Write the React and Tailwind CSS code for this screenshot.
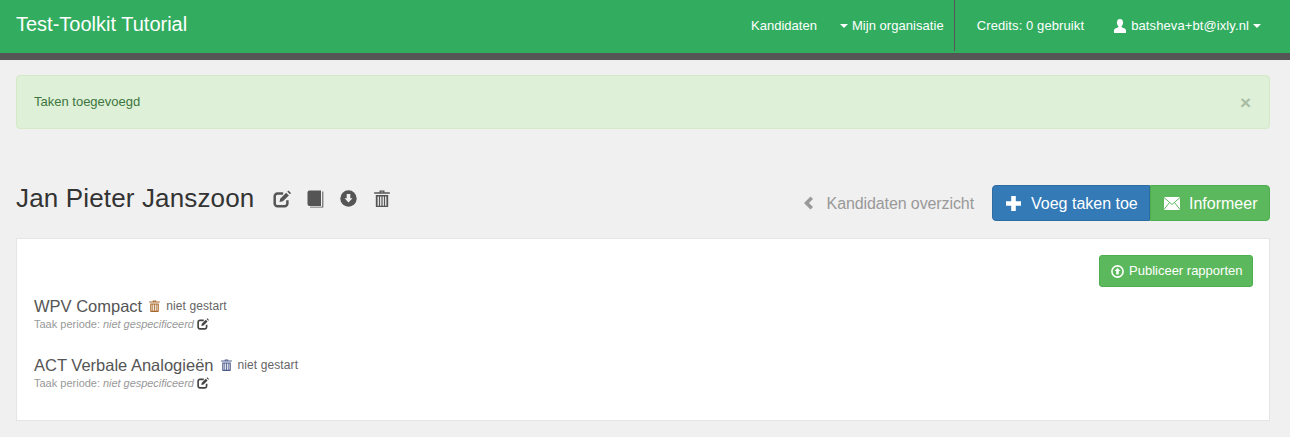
const Caret = () => (
  <span className="inline-block w-0 h-0 border-x-[4px] border-x-transparent border-t-[4px] border-t-white" />
);

const EditIcon = ({ size = 18, color = "#555" }) => (
  <svg width={size} height={size} viewBox="0 0 16 16" fill="none">
    <path d="M12.8 9v3A2.500 2.500 0 0 1 10.300 14.500H4A2.500 2.500 0 0 1 1.500 12V5.700A2.500 2.500 0 0 1 4 3.200h5" stroke={color} strokeWidth="2.200" />
    <path d="M5.800 10.700l.6-3 5.300-5.300 2.400 2.400-5.300 5.300z" fill={color} />
    <path d="M12.700 1.400l1-1 2.300 2.300-1 1z" fill={color} />
  </svg>
);

const BookIcon = () => (
  <svg width="17" height="18" viewBox="0 0 17 18">
    <path d="M2.500 0.500H14V16H2.500A2 2 0 0 1 .5 14V2.500a2 2 0 0 1 2-2z" fill="#555" />
    <path d="M15.300 1.500H16.300V17.500H3V16.700H15.300z" fill="#555" />
  </svg>
);

const DownIcon = () => (
  <svg width="17" height="17" viewBox="0 0 17 17">
    <circle cx="8.500" cy="8.500" r="8.200" fill="#555" />
    <path d="M6.700 4h3.600v4.200h2.200L8.500 12.600 4.500 8.200h2.200z" fill="#f0f0f0" />
  </svg>
);

const TrashIcon = ({ size = 16, color = "#555" }) => (
  <svg width={size} height={size * 1.1} viewBox="0 0 16 17.600">
    <path d="M5.500 2.200V.6h5v1.600H15.800v1.500H.2V2.200zM6.800 1.700v.6h2.400v-.6z" fill={color} fillRule="evenodd" />
    <path d="M1.800 5h12.400v11.300a1 1 0 0 1-1 1H2.800a1 1 0 0 1-1-1zM3.600 6.400v9.400h1.300V6.400zM6.100 6.400v9.400h1.300V6.400zM8.600 6.400v9.400h1.300V6.400zM11.100 6.400v9.400h1.300V6.400z" fill={color} fillRule="evenodd" />
  </svg>
);

const UserIcon = () => (
  <svg width="14" height="14" viewBox="0 0 14 14">
    <path d="M7 0c2 0 3.100 1.500 3.100 3.600 0 1.500-.6 2.900-1.500 3.700-.3.500 0 1 .7 1.300 1.500.6 3.700 1 3.700 2.900V14H1v-2.500c0-1.900 2.200-2.300 3.700-2.900.7-.3 1-.8.7-1.300C4.500 6.500 3.900 5.100 3.900 3.600 3.900 1.500 5 0 7 0z" fill="#fff" />
  </svg>
);

const PlusIcon = () => (
  <svg width="15" height="15" viewBox="0 0 15 15">
    <path d="M5.200 0h4.600v5.200H15v4.600H9.800V15H5.200V9.800H0V5.200h5.200z" fill="#fff" />
  </svg>
);

const MailIcon = () => (
  <svg width="16" height="13" viewBox="0 0 16 13">
    <path d="M0 0h16v13H0z" fill="#fff" />
    <path d="M0 .5L8 7.500 16 .5M0 12.500L5.500 5.500M16 12.500L10.500 5.500" fill="none" stroke="#5cb85c" strokeWidth="1" />
  </svg>
);

const UpCircle = () => (
  <svg width="13" height="13" viewBox="0 0 13 13">
    <circle cx="6.500" cy="6.500" r="5.600" fill="none" stroke="#fff" strokeWidth="1.600" />
    <path d="M6.500 2.900l3 3.100H7.800v3.600H5.200V6H3.500z" fill="#fff" />
  </svg>
);

const Chevron = () => (
  <svg width="11" height="14" viewBox="0 0 11 14">
    <path d="M7.500 0.500L10 3 6 7l4 4-2.500 2.500L1 7z" fill="#999" />
  </svg>
);

const Task = ({ name, color }) => (
  <div>
    <div className="flex items-center h-[20px]">
      <span className="text-[16.5px] text-[#555]">{name}</span>
      <span className="ml-[7px]"><TrashIcon size={11} color={color} /></span>
      <span className="ml-[6px] text-[12px] tracking-[0.1px] text-[#666]">niet gestart</span>
    </div>
    <div className="flex items-center h-[14px] mt-[1px] text-[11px] text-[#999]">
      <span>Taak periode:</span>
      <em className="ml-[3px] tracking-[-0.05px]">niet gespecificeerd</em>
      <span className="ml-[3px]"><EditIcon size={12} color="#444" /></span>
    </div>
  </div>
);

export default function App() {
  return (
    <div className="min-h-[437px] bg-[#f0f0f0] font-['Liberation_Sans',Arial,sans-serif] overflow-hidden">
      <nav className="h-[60px] bg-[#32ad60] border-b-[7px] border-[#555] flex items-stretch pl-[16px] text-white">
        <div className="text-[20px] leading-[49px] h-[50px]">Test-Toolkit Tutorial</div>
        <div className="ml-auto flex items-center text-[13px] h-[51px] pr-[29px]">
          <span className="mr-[23px]">Kandidaten</span>
          <span className="flex items-center gap-[4px] mr-[10px] tracking-[0.05px]"><Caret />Mijn organisatie</span>
          <span className="w-px h-[51px] bg-[#555] mr-[22px]" />
          <span className="mr-[29px] tracking-[0.1px]">Credits: 0 gebruikt</span>
          <span className="flex items-center gap-[4px]"><UserIcon /><span className="tracking-[0.1px]">batsheva+bt@ixly.nl</span><Caret /></span>
        </div>
      </nav>

      <main className="pl-[16px] pr-[20px] pt-[15px]">
        <div className="h-[54px] rounded-[4px] bg-[#dff0d8] border border-[#d6e9c6] flex items-center justify-between pl-[17px] pr-[18px] text-[13px] text-[#3c763d]">
          <span>Taken toegevoegd</span>
          <span className="text-[19px] font-bold text-[#a9bda4] leading-none">×</span>
        </div>

        <div className="flex justify-between mt-[56px] h-[36px]">
          <div className="flex items-center h-[27px]">
            <h1 className="text-[26px] tracking-[0.15px] text-[#333] leading-none -mt-[1px]">Jan Pieter Janszoon</h1>
            <span className="ml-[19px] flex"><EditIcon /></span>
            <span className="ml-[16px] flex"><BookIcon /></span>
            <span className="ml-[16px] flex"><DownIcon /></span>
            <span className="ml-[17px] flex"><TrashIcon size={16} /></span>
          </div>
          <div className="flex items-center">
            <Chevron />
            <span className="ml-[13px] mr-[18px] pt-[1px] text-[16px] tracking-[-0.1px] text-[#999]">Kandidaten overzicht</span>
            <div className="flex h-[36px] text-[16px] text-white">
              <span className="flex items-center gap-[10px] w-[158px] pl-[13px] bg-[#337ab7] border border-[#2e6da4] rounded-l-[4px]"><PlusIcon /><span className="pt-[1px]">Voeg taken toe</span></span>
              <span className="flex items-center gap-[9px] w-[120px] pl-[13px] bg-[#5cb85c] border border-[#4cae4c] rounded-r-[4px]"><MailIcon /><span className="pt-[1px]">Informeer</span></span>
            </div>
          </div>
        </div>

        <section className="mt-[17px] h-[183px] bg-white border border-[#e5e5e5] pl-[17px] pr-[16px] pt-[16px]">
          <div className="flex justify-end">
            <span className="flex items-center gap-[5px] h-[32px] w-[154px] pl-[11px] text-[13px] text-white bg-[#5cb85c] border border-[#4cae4c] rounded-[3px]"><UpCircle />Publiceer rapporten</span>
          </div>
          <div className="mt-[9px] flex flex-col gap-[24px]">
            <Task name="WPV Compact" color="#a8682c" />
            <Task name="ACT Verbale Analogieën" color="#4c5a8c" />
          </div>
        </section>
      </main>
    </div>
  );
}
